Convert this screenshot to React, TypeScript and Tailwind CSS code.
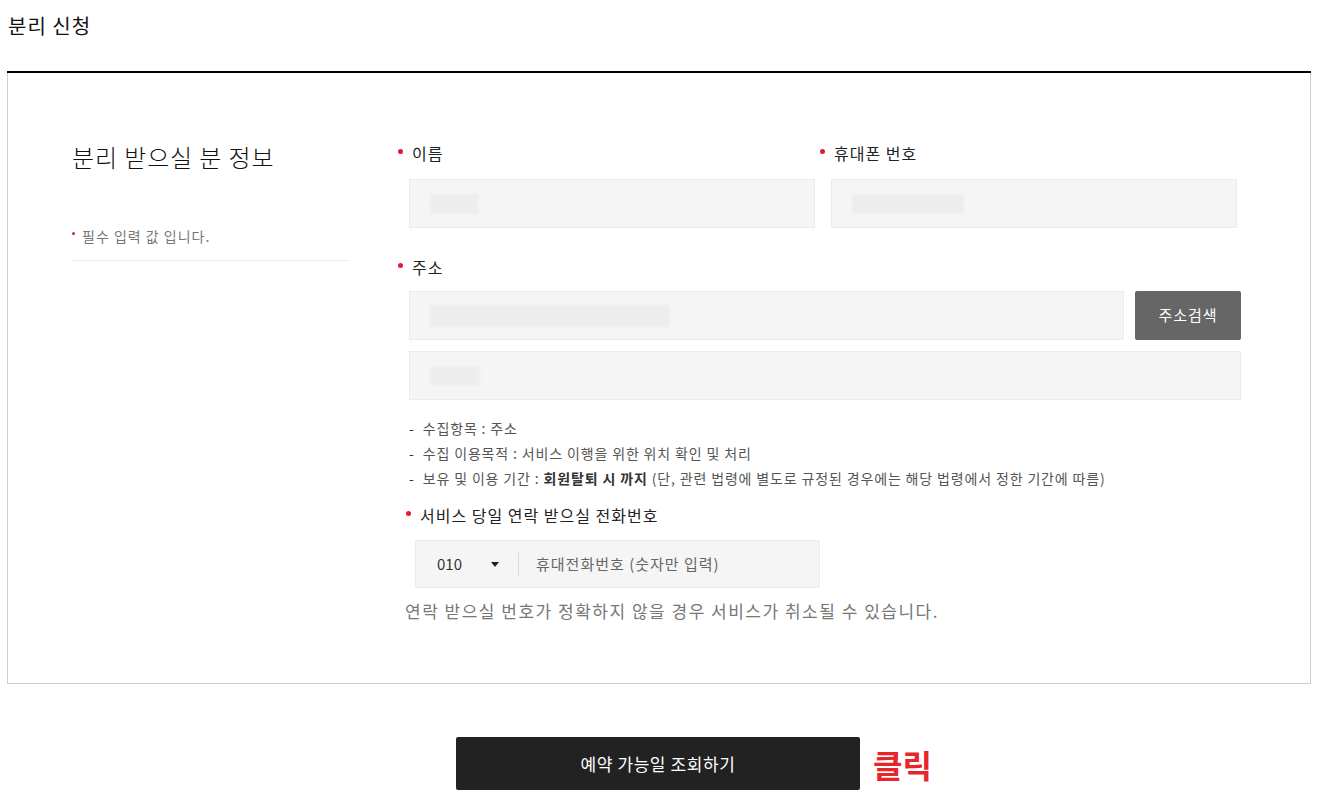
const font = { fontFamily: '"Noto Sans CJK KR", "Noto Sans", sans-serif' };

function Dot() {
  return <span className="w-[5px] h-[5px] rounded-full bg-[#e31837] shrink-0 mb-[4px]" />;
}

function Label({ children, className = "-ml-[11px]" }: { children: React.ReactNode; className?: string }) {
  return (
    <div className={`flex items-center gap-[9px] text-[16px] leading-[22px] text-[#222] tracking-[1px] ${className}`}>
      <Dot />
      <span>{children}</span>
    </div>
  );
}

function Field({ blurW, blurH = 20, className = "" }: { blurW: number; blurH?: number; className?: string }) {
  return (
    <div className={`h-[49px] bg-[#f5f5f5] border border-[#ececec] flex items-center pl-[20px] ${className}`}>
      <div
        className="rounded-[2px] bg-[#ededed] blur-[1px]"
        style={{ width: blurW, height: blurH }}
      />
    </div>
  );
}

export default function App() {
  return (
    <div className="w-[1323px] min-h-[810px] bg-white" style={font}>
      <h1 className="pl-2 pt-[12px] text-[20px] leading-[28px] text-[#111] font-normal tracking-[1px]">분리 신청</h1>

      <div className="ml-[7px] mt-[31px] w-[1304px] border border-t-0 border-[#cfcfcf]">
        <div className="border-t-2 border-black -mx-px" />
        <div className="flex pt-[67px] pb-[60px]">
          {/* left */}
          <div className="w-[342px] pl-[64px] shrink-0">
            <h2 className="text-[24px] leading-[34px] text-[#111] font-light tracking-[0.9px] w-[278px]">분리 받으실 분 정보</h2>
            <div className="mt-[52px] w-[278px] border-b border-[#ececec] pb-[14px] flex items-center gap-[7px] text-[14px] leading-[20px] text-[#777] tracking-[1px]">
              <span className="w-[3px] h-[3px] rounded-full bg-[#e31837] mb-[5px]" />
              <span>필수 입력 값 입니다.</span>
            </div>
          </div>

          {/* right */}
          <div className="ml-[59px] w-[832px] pt-[2px]">
            <div className="flex gap-[16px]">
              <div>
                <Label>이름</Label>
                <Field blurW={48} className="mt-[15px] w-[406px]" />
              </div>
              <div>
                <Label>휴대폰 번호</Label>
                <Field blurW={112} className="mt-[15px] w-[406px]" />
              </div>
            </div>

            <Label className="-ml-[11px] mt-[28px]">주소</Label>
            <div className="mt-[13px] flex gap-[11px]">
              <Field blurW={240} blurH={22} className="flex-1" />
              <button className="w-[106px] h-[49px] bg-[#666] text-white text-[15px] tracking-[1px] rounded-[2px]">주소검색</button>
            </div>
            <Field blurW={50} blurH={18} className="mt-[11px] h-[48px]" />

            <ul className="mt-[16px] text-[14px] leading-[25px] text-[#555] tracking-[0.85px]">
              <li className="flex gap-[8px]"><span className="text-[#333]">-</span>수집항목 : 주소</li>
              <li className="flex gap-[8px]"><span className="text-[#333]">-</span>수집 이용목적 : 서비스 이행을 위한 위치 확인 및 처리</li>
              <li className="flex gap-[8px]">
                <span className="text-[#333]">-</span>
                <span>보유 및 이용 기간 : <b className="text-[#333] font-bold">회원탈퇴 시 까지</b> (단, 관련 법령에 별도로 규정된 경우에는 해당 법령에서 정한 기간에 따름)</span>
              </li>
            </ul>

            <Label className="-ml-[3px] mt-[13px] gap-[7px]">서비스 당일 연락 받으실 전화번호</Label>
            <div className="mt-[14px] ml-[6px] w-[405px] h-[48px] bg-[#f5f5f5] border border-[#ececec] flex items-center">
              <span className="pl-[21px] w-[75px] text-[15px] text-[#333]">010</span>
              <span className="w-0 h-0 border-l-[4px] border-r-[4px] border-t-[5px] border-l-transparent border-r-transparent border-t-[#222]" />
              <span className="ml-[19px] w-px h-[23px] bg-[#dcdcdc]" />
              <span className="ml-[17px] text-[15px] text-[#666] tracking-[1px]">휴대전화번호 (숫자만 입력)</span>
            </div>
            <p className="mt-[11px] -ml-[4px] text-[17px] leading-[24px] text-[#777] tracking-[1.5px]">
              연락 받으실 번호가 정확하지 않을 경우 서비스가 취소될 수 있습니다.
            </p>
          </div>
        </div>
      </div>

      <div className="mt-[53px] flex items-center">
        <button className="ml-[456px] w-[404px] h-[53px] bg-[#222] rounded-[2px] text-white text-[17px] tracking-[0.6px]">
          예약 가능일 조회하기
        </button>
        <span className="ml-[13px] text-[32px] font-bold text-[#e8252b] leading-none">클릭</span>
      </div>
    </div>
  );
}
